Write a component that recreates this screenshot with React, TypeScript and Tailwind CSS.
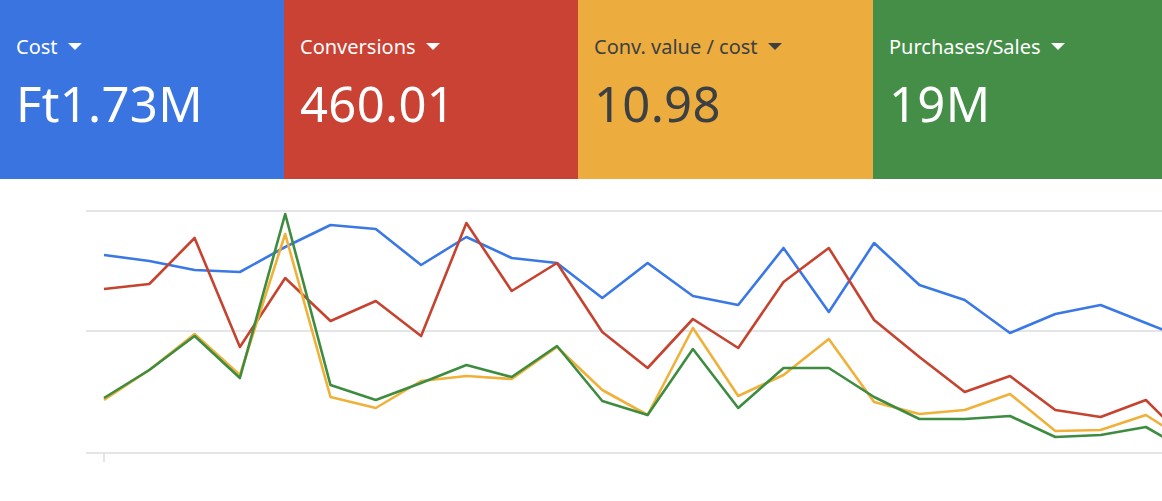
const xs = (i: number) => 104 + 45.3 * i;

const series: { color: string; ys: number[] }[] = [
  {
    color: "#3a78e6",
    ys: [255, 261, 270, 272, 247, 225, 229, 265, 237, 258, 263, 298, 263, 296, 305, 248, 312, 243, 285, 300, 333, 314, 305, 323, 341],
  },
  {
    color: "#c5432f",
    ys: [289, 284, 238, 347, 278, 321, 301, 336, 223, 291, 263, 332, 368, 319, 348, 282, 248, 320, 357, 392, 376, 410, 417, 400, 445],
  },
  {
    color: "#3d8c40",
    ys: [398, 370, 336, 378, 214, 385, 400, 383, 365, 377, 346, 401, 415, 349, 408, 368, 368, 397, 419, 419, 416, 437, 435, 427, 453],
  },
  {
    color: "#f0b13a",
    ys: [400, 370, 334, 375, 234, 397, 408, 381, 376, 379, 347, 390, 415, 328, 396, 375, 339, 402, 414, 410, 394, 431, 430, 415, 444],
  },
];

const tiles = [
  { label: "Cost", value: "Ft1.73M", bg: "bg-[#3a74e0]", fg: "text-white", w: "w-[284px]" },
  { label: "Conversions", value: "460.01", bg: "bg-[#c94233]", fg: "text-white", w: "w-[294px]" },
  { label: "Conv. value / cost", value: "10.98", bg: "bg-[#ecad3e]", fg: "text-[#3c4043]", w: "w-[295px]" },
  { label: "Purchases/Sales", value: "19M", bg: "bg-[#448e47]", fg: "text-white", w: "flex-1" },
];

export default function App() {
  return (
    <div className="w-[1162px] h-[501px] bg-white overflow-hidden font-['Roboto',sans-serif]">
      <div className="flex h-[179px]">
        {tiles.map((t) => (
          <div key={t.label} className={`${t.bg} ${t.fg} ${t.w} pl-4 pt-[33px]`}>
            <div className="flex items-center gap-[10px] text-[20px] leading-[28px]">
              {t.label}
              <svg width="14" height="8" viewBox="0 0 14 8">
                <path d="M0 0h14L7 7z" fill="currentColor" />
              </svg>
            </div>
            <div className="mt-[14px] text-[49px] leading-[56px] tracking-[0.3px]">{t.value}</div>
          </div>
        ))}
      </div>
      <svg width="1162" height="322" viewBox="0 179 1162 322" className="block">
        {[211, 331, 453].map((y) => (
          <line key={y} x1="86" x2="1162" y1={y} y2={y} stroke="#dadce0" strokeWidth="1.5" />
        ))}
        <line x1="104" x2="104" y1="453" y2="462" stroke="#dadce0" strokeWidth="1.5" />
        {[series[0], series[1], series[3], series[2]].map((s) => (
          <polyline
            key={s.color}
            fill="none"
            stroke={s.color}
            strokeWidth="2.6"
            strokeLinejoin="round"
            points={s.ys.map((y, i) => `${xs(i)},${y}`).join(" ")}
          />
        ))}
      </svg>
    </div>
  );
}
